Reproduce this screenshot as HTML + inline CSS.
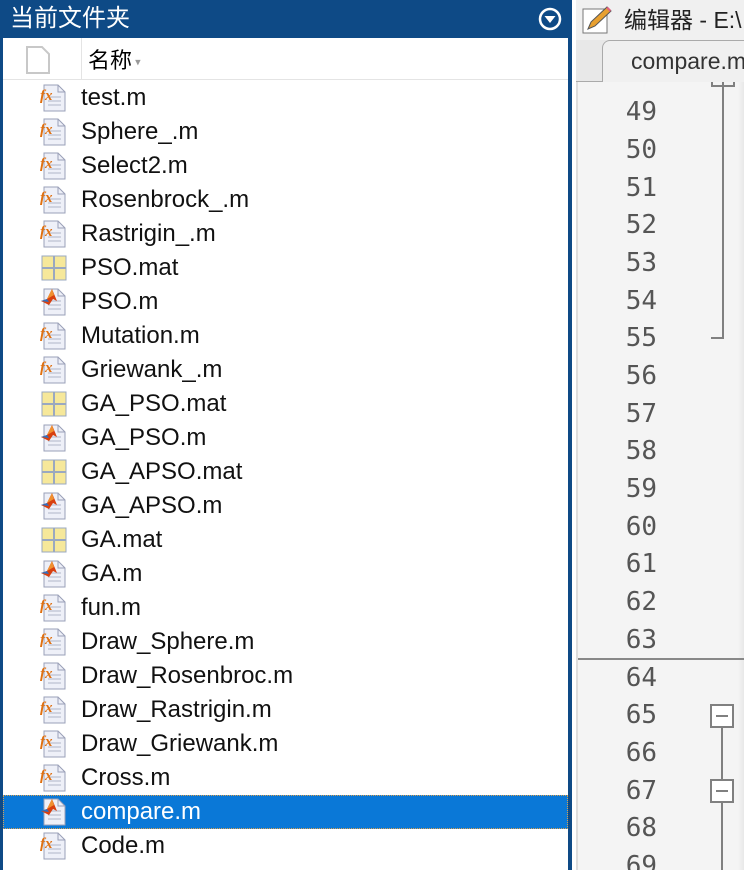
<!DOCTYPE html>
<html><head><meta charset="utf-8"><style>
*{margin:0;padding:0;box-sizing:border-box}
body{width:744px;height:870px;overflow:hidden;background:#fff;font-family:"Liberation Sans","Noto Sans CJK SC",sans-serif;position:relative}
#left{position:absolute;left:0;top:0;width:572px;height:870px;background:#fff;border-left:3px solid #0e4a86;border-right:4px solid #0e4a86}
#lt{position:absolute;left:0;top:0;width:572px;height:38px;background:#0e4a86;color:#fff;font-size:24px;line-height:38px;padding-left:10px}
#hdr{position:absolute;left:3px;top:38px;width:565px;height:42px;border-bottom:1px solid #e4e4e4;background:#fff}
#hdr .sep{position:absolute;left:78px;top:0;width:1px;height:42px;background:#e4e4e4}
#hdr .nm{position:absolute;left:85px;top:5px;font-size:22px}
.row{position:absolute;left:3px;width:565px;height:34px;font-size:24px;line-height:34px;color:#111}
.row span{position:absolute;left:78px}
.row svg{position:absolute;left:36px;top:2px}
.sel{background:#0a78d7;color:#fff;outline:1px dotted #d8a050;outline-offset:-1px}
#ed{position:absolute;left:572px;top:0;width:172px;height:870px;background:#f4f4f4;border-left:4px solid #fff}
#et{position:absolute;left:0;top:0;width:172px;height:40px;background:#f0f0f0;font-size:23px;line-height:40px;padding-left:48px;white-space:nowrap;overflow:hidden;color:#222}
#tabbar{position:absolute;left:0;top:40px;width:172px;height:42px;background:#e8e8e8;border-bottom:1px solid #aaa}
#tab{position:absolute;left:26px;top:0;width:160px;height:42px;background:#f0f0f0;border:1px solid #aaa;border-bottom:none;border-radius:8px 0 0 0;font-size:23px;line-height:40px;padding-left:28px;color:#333;white-space:nowrap}
#gut{position:absolute;left:0;top:82px;width:172px;height:788px;border-left:2px solid #ddd;overflow:hidden}
.ln{position:absolute;left:0;width:79px;text-align:right;font-family:"DejaVu Sans Mono",monospace;font-size:26px;color:#555;line-height:38px}
#shadow{position:absolute;right:0;top:82px;width:10px;height:788px;background:linear-gradient(90deg,#f4f4f4,#e0e0e0)}
</style></head><body>
<svg width="0" height="0" style="position:absolute">
<defs>
<symbol id="pg" viewBox="0 0 30 30"><path d="M5 2h14l7 7v19H5z" fill="#eef0f8" stroke="#9aa0b8"/><path d="M19 2v7h7" fill="none" stroke="#9aa0b8"/><path d="M9 14h13M9 18h13M9 22h13" stroke="#b0b6c8"/></symbol>
<symbol id="fx" viewBox="0 0 30 30"><use href="#pg"/><text x="1" y="17" font-size="15" font-style="italic" font-weight="bold" fill="#e07010" font-family="Liberation Serif,serif">fx</text></symbol>
<symbol id="mm" viewBox="0 0 30 30"><use href="#pg"/><path d="M2 14l6-2 5-10 5 12-4-2-4 6z" fill="#d84010"/><path d="M8 12l5-10 2 6z" fill="#f09030"/><path d="M2 14l6-2 2 3z" fill="#3070c0"/></symbol>
<symbol id="mat" viewBox="0 0 30 30"><rect x="3" y="3" width="24" height="24" fill="#f6e89a" stroke="#9aa8c0"/><path d="M15 3v24M3 15h24" stroke="#9aa8c0" stroke-width="2"/></symbol>
</defs></svg>
<div id="left">
<div id="lt" style="left:-3px">当前文件夹
<svg style="position:absolute;left:538px;top:7px" width="24" height="24" viewBox="0 0 24 24"><circle cx="12" cy="12" r="10" fill="none" stroke="#fff" stroke-width="2.5"/><path d="M6.5 9h11L12 16z" fill="#fff"/></svg></div>
<div id="hdr" style="left:0"><svg style="position:absolute;left:22px;top:8px" width="26" height="28" viewBox="0 0 26 28"><path d="M2 1h15l7 7v19H2z" fill="#fff" stroke="#c8c8c8" stroke-width="2"/></svg><div class="sep"></div><div class="nm">名称<span style="font-size:11px;color:#999;vertical-align:middle"> ▾</span></div></div>
</div>
<div style="position:absolute;left:0;top:0">
<div class="row" style="top:81px"><svg width="30" height="30"><use href="#fx"/></svg><span>test.m</span></div>
<div class="row" style="top:115px"><svg width="30" height="30"><use href="#fx"/></svg><span>Sphere_.m</span></div>
<div class="row" style="top:149px"><svg width="30" height="30"><use href="#fx"/></svg><span>Select2.m</span></div>
<div class="row" style="top:183px"><svg width="30" height="30"><use href="#fx"/></svg><span>Rosenbrock_.m</span></div>
<div class="row" style="top:217px"><svg width="30" height="30"><use href="#fx"/></svg><span>Rastrigin_.m</span></div>
<div class="row" style="top:251px"><svg width="30" height="30"><use href="#mat"/></svg><span>PSO.mat</span></div>
<div class="row" style="top:285px"><svg width="30" height="30"><use href="#mm"/></svg><span>PSO.m</span></div>
<div class="row" style="top:319px"><svg width="30" height="30"><use href="#fx"/></svg><span>Mutation.m</span></div>
<div class="row" style="top:353px"><svg width="30" height="30"><use href="#fx"/></svg><span>Griewank_.m</span></div>
<div class="row" style="top:387px"><svg width="30" height="30"><use href="#mat"/></svg><span>GA_PSO.mat</span></div>
<div class="row" style="top:421px"><svg width="30" height="30"><use href="#mm"/></svg><span>GA_PSO.m</span></div>
<div class="row" style="top:455px"><svg width="30" height="30"><use href="#mat"/></svg><span>GA_APSO.mat</span></div>
<div class="row" style="top:489px"><svg width="30" height="30"><use href="#mm"/></svg><span>GA_APSO.m</span></div>
<div class="row" style="top:523px"><svg width="30" height="30"><use href="#mat"/></svg><span>GA.mat</span></div>
<div class="row" style="top:557px"><svg width="30" height="30"><use href="#mm"/></svg><span>GA.m</span></div>
<div class="row" style="top:591px"><svg width="30" height="30"><use href="#fx"/></svg><span>fun.m</span></div>
<div class="row" style="top:625px"><svg width="30" height="30"><use href="#fx"/></svg><span>Draw_Sphere.m</span></div>
<div class="row" style="top:659px"><svg width="30" height="30"><use href="#fx"/></svg><span>Draw_Rosenbroc.m</span></div>
<div class="row" style="top:693px"><svg width="30" height="30"><use href="#fx"/></svg><span>Draw_Rastrigin.m</span></div>
<div class="row" style="top:727px"><svg width="30" height="30"><use href="#fx"/></svg><span>Draw_Griewank.m</span></div>
<div class="row" style="top:761px"><svg width="30" height="30"><use href="#fx"/></svg><span>Cross.m</span></div>
<div class="row sel" style="top:795px"><svg width="30" height="30"><use href="#mm"/></svg><span>compare.m</span></div>
<div class="row" style="top:829px"><svg width="30" height="30"><use href="#fx"/></svg><span>Code.m</span></div>
</div>
<div id="ed">
<div id="et"><svg style="position:absolute;left:6px;top:5px" width="30" height="30" viewBox="0 0 30 30"><rect x="1" y="4" width="24" height="24" fill="#fff" stroke="#777"/><path d="M6 24l3-7L25 2l4 4-16 15z" fill="#e8a030" stroke="#555"/><path d="M24 3l4 4 1-2-3-3z" fill="#e06080"/></svg>编辑器 - E:\</div>
<div id="tabbar"><div id="tab">compare.m</div></div>
<div id="gut">
<div class="ln" style="top:11px">49</div><div class="ln" style="top:49px">50</div><div class="ln" style="top:87px">51</div><div class="ln" style="top:124px">52</div><div class="ln" style="top:162px">53</div><div class="ln" style="top:200px">54</div><div class="ln" style="top:237px">55</div><div class="ln" style="top:275px">56</div><div class="ln" style="top:313px">57</div><div class="ln" style="top:350px">58</div><div class="ln" style="top:388px">59</div><div class="ln" style="top:426px">60</div><div class="ln" style="top:463px">61</div><div class="ln" style="top:501px">62</div><div class="ln" style="top:539px">63</div><div class="ln" style="top:577px">64</div><div class="ln" style="top:614px">65</div><div class="ln" style="top:652px">66</div><div class="ln" style="top:690px">67</div><div class="ln" style="top:727px">68</div><div class="ln" style="top:765px">69</div>
<div id="shadow" style="top:0"></div>
<svg style="position:absolute;left:0;top:0" width="172" height="788">
<path d="M145 0v256h-12" fill="none" stroke="#808080" stroke-width="2"/>
<path d="M134 -4h22v8h-22z" fill="none" stroke="#808080" stroke-width="2"/>
<path d="M0 577h172" stroke="#888" stroke-width="2"/>
<rect x="133" y="623" width="22" height="22" fill="#fff" stroke="#808080" stroke-width="2"/><path d="M138 634h12" stroke="#808080" stroke-width="2"/>
<path d="M144 645v54" stroke="#808080" stroke-width="2"/>
<rect x="133" y="698" width="22" height="22" fill="#fff" stroke="#808080" stroke-width="2"/><path d="M138 709h12" stroke="#808080" stroke-width="2"/>
<path d="M144 720v70" stroke="#808080" stroke-width="2"/>
</svg>
</div>
</div>
</body></html>
